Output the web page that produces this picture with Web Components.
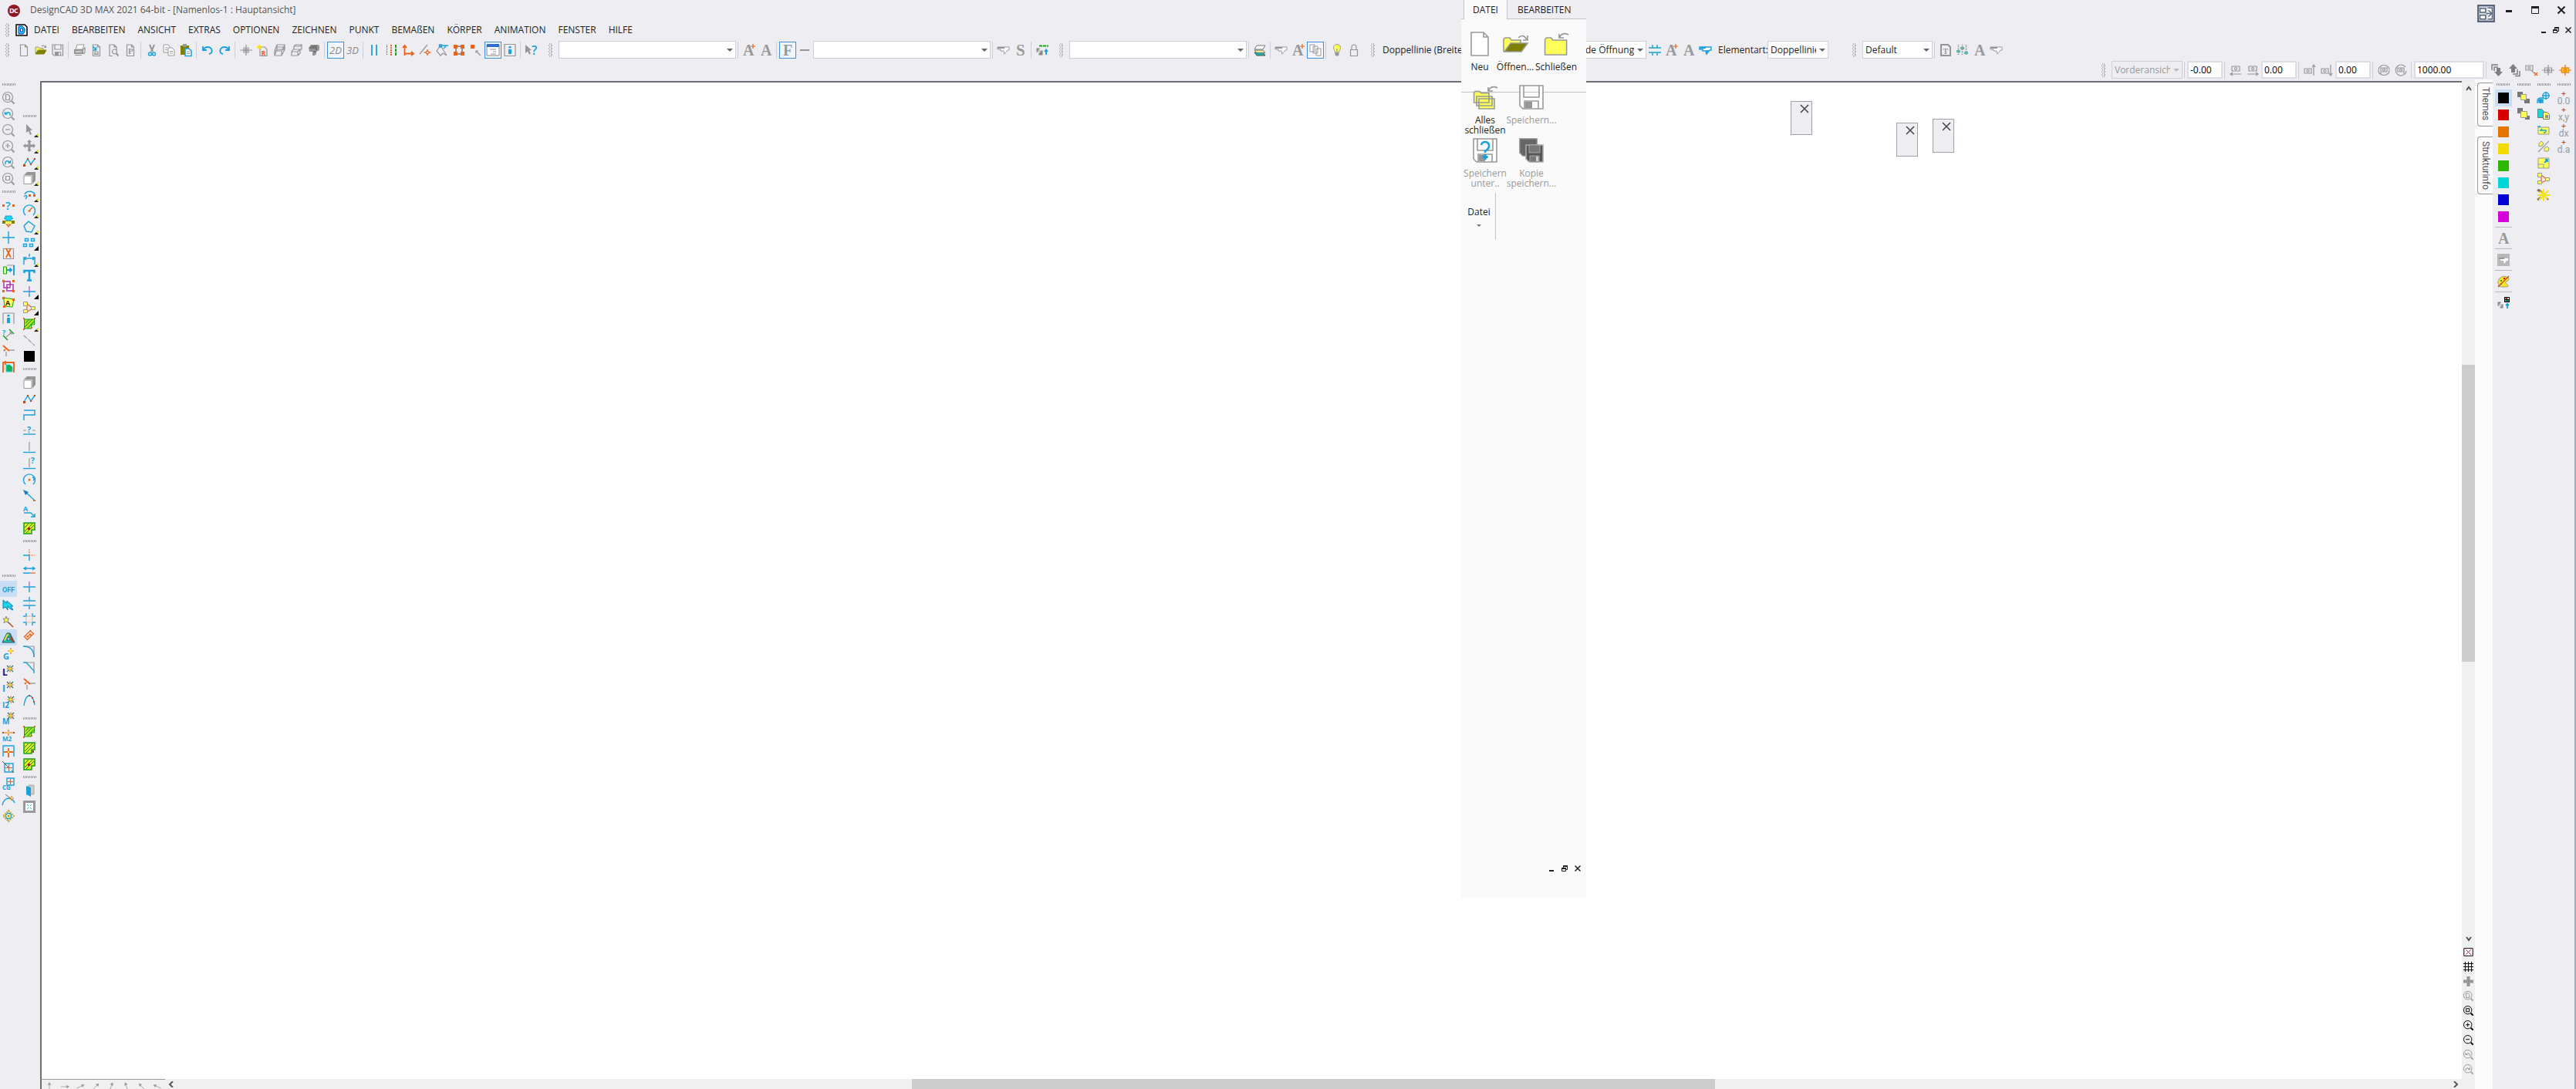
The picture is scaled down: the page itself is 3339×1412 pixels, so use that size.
<!DOCTYPE html>
<html lang="de">
<head>
<meta charset="utf-8">
<title>DesignCAD 3D MAX 2021 64-bit</title>
<style>
  body {
    margin: 0;
    font: 12px/16px "Open Sans", "Noto Sans", sans-serif;
    color: #1e1e1e;
    background: #eeeef2;
  }
</style>
</head>
<body>
<cad-app></cad-app>

<script>
const ICONS = {
  // files
  new: `<path fill="#fff" class="g" d="M3.500 1h6l3 3v11.500h-9zM9.500 1v3h3"/>`,
  open: `<path fill="#f5f55a" stroke="#999" d="M1 12V4h4l1 1.500h5V8"/><path fill="#808000" stroke="#808000" d="M1 13l3.500-5H15l-3 5z"/><path class="g" d="M9 3q3-2 5 1M14.500 2v2.500H12"/>`,
  save: `<path class="g" d="M1 1h13.500v14H3L1 13z"/><path class="g" d="M4 1v6h8V1M4.500 15v-4.500h7V15"/><path class="G" d="M5 11h4v4H5z"/>`,
  print: `<path class="G" d="M1 7h12v6H1z"/><path fill="#fff" stroke="#999" d="M5 1h9l-2 6H3z"/><path d="M3 10h8" stroke="#fff"/><path class="g" d="M13 7l2-2v6l-2 2M2 14.500h9"/>`,
  plot: `<path class="g" d="M3.500 1h6l3 3v11.500h-9zM9.500 1v3h3"/><path class="b" d="M3 3l4 4M7.500 4v4H4"/><path class="g" d="M6 10h4v3H6zM5 13.500h6"/>`,
  preview: `<path class="g" d="M7 15.500H3V1h6l3 3v4M9 1v3h3"/><circle class="g" cx="9.500" cy="10" r="3"/><path class="g2" d="M12 12.500l2.500 3"/>`,
  pdoc: `<path class="g" d="M3.500 1h6l3 3v11.500h-9zM9.500 1v3h3"/><text x="5" y="13" font-family="Liberation Serif" font-size="11" font-weight="bold" fill="#999">P</text>`,
  // edit
  cut: `<path class="g2" d="M5 1l4 9M11 1L7 10"/><circle class="b" cx="5.500" cy="13" r="2"/><circle class="b" cx="10.500" cy="13" r="2"/>`,
  copy: `<path fill="#fff" stroke="#999" d="M1 1h6l2 2v8H1z"/><path fill="#fff" stroke="#999" d="M7 5h5l3 3v7H7zM9 9.500h4M9 12h4M3 5h3M3 7.500h3"/>`,
  paste: `<path fill="#808000" d="M1 2h11v12H1z"/><path fill="#999" d="M4 0h5v4H4z"/><path fill="#fff" stroke="#1ba1d8" stroke-width="1.500" d="M7 6h5l3 3v6.500H7z"/><path class="g" d="M9 10h4M9 12.500h4"/>`,
  undo: `<path class="b2" d="M2 3v5h5M2.500 7.500C5 3 11 3 13 6.500s0 6-3 6.500"/>`,
  redo: `<path class="b2" d="M14 3v5H9M13.500 7.500C11 3 5 3 3 6.500s0 6 3 6.500"/>`,
  // view
  origin: `<path class="g" d="M0 8h16M8 1v14M5 5h6v6H5z"/><circle class="g" cx="8" cy="8" r="1.500"/>`,
  render: `<path class="g" d="M4 4h6l3 3v8.500H4z"/><path fill="#ffe600" d="M3 0l1 2.500L6.500 2 5 4l1.500 2L4 5.500 3 8 2 5.500-.5 6 1 4-.5 2 2 2.500z"/><text x="5.500" y="14.500" font-family="Open Sans" font-size="9" font-weight="bold" fill="#e8641b">R</text>`,
  wire: `<path class="g" d="M1 9h9v6H1zM4 1h10v6H4zM1 9l3-8M10 9l4-8M1 15l3-8M10 15l4-8M3 4h10v6"/>`,
  hidden: `<path class="g" d="M1 10h8v5H1zM1 10l2-3h9l-3 3M12 7v5l-3 3M4 7V3l2-2h8l-2 2H4M14 1v6h-2"/>`,
  shaded: `<path class="G" d="M1 5l3-4h10l1 2v5l-4 2v3l-2 2H6v-5H2z"/><path d="M2 5h9v3M4 3h8M7 10h4" stroke="#555" fill="none"/>`,
  d2: `<text x="0" y="13" font-family="Open Sans" font-style="italic" font-size="13" fill="#888">2D</text>`,
  d3: `<text x="0" y="13" font-family="Open Sans" font-style="italic" font-size="13" fill="#888">3D</text>`,
  // snap and draw aids
  parallel: `<path class="b2" d="M5 1v14M11 1v14"/>`,
  dashes: `<path stroke="#555" d="M2.500 1v14" stroke-dasharray="1 1"/><path stroke="#e8641b" stroke-width="2" d="M8 1v14" stroke-dasharray="2 1"/><path stroke="#18a018" stroke-width="2" d="M14 1v14" stroke-dasharray="4 1"/>`,
  axes: `<path class="o2" d="M3.500 15V3M1 5l2.500-3L6 5M3 12.500h11M12 10l3 2.500-3 2.500"/>`,
  probe: `<path class="g" d="M1 13L11 1"/><path class="o" d="M11 7v2M11 15v-2M6 11h2M16 11h-2M11 8.500l2.500 2.500-2.500 2.500L8.500 11z"/>`,
  node: `<path class="g" d="M1 9L6 2l8 13-5-3-3 3z"/><path class="b" d="M4.500 1h3v3h-3zM8 2h8M10 6l3-3"/>`,
  group: `<path class="g2" d="M3 3h10M3 13h10M4 3v10M12 3v10"/><path class="O" d="M1 1h5v5H1zM10 1h5v5h-5zM1 10h5v5H1zM10 10h5v5h-5z"/>`,
  ungroup: `<path class="O" d="M1 1h5v5H1z"/><path class="g" d="M8 9l6 6M8 12V9h3"/>`,
  props: `<path fill="#fff" stroke="#888" d="M0 1h16v14H0z"/><path fill="#2d6fd0" d="M0 0h16v4H0z"/><path class="g" d="M4 7h8M8 10h4M5 13h7"/>`,
  info: `<path class="g" d="M1 .5h14v15H1z"/><path fill="#1ba1d8" d="M6.500 3h3v2.500h-3zM6 7h4v6H6z"/>`,
  whatsthis: `<path class="G" d="M0 1l8 7-3 .5 2 4-2 1-2-4L0 12z"/><text x="8" y="14" font-family="Open Sans" font-size="16" font-weight="600" fill="#1ba1d8">?</text>`,
  aplus: `<text x="0" y="15" font-family="Liberation Serif" font-size="20" font-weight="bold" fill="#999">A</text><path class="o" d="M13 0v6M10 3h6"/>`,
  a: `<text x="1" y="15" font-family="Liberation Serif" font-size="20" font-weight="bold" fill="#999">A</text>`,
  f: `<text x="2" y="15" font-family="Liberation Serif" font-size="20" font-weight="bold" fill="#999">F</text>`,
  s: `<text x="2" y="15" font-family="Liberation Serif" font-size="21" font-weight="bold" fill="#999">S</text>`,
  dash: `<path class="G" d="M2 7h12v2H2z"/>`,
  hand: `<path fill="#fff" stroke="#999" d="M0 4h15v4h-2l-4 5-1-4H4V7H0z"/><path class="G" d="M0 4h9v2H0z"/>`,
  handblue: `<path fill="#fff" stroke="#1ba1d8" stroke-width="1.500" d="M0 4h15v4h-2l-4 5-1-4H4V7H0z"/><path fill="#1ba1d8" d="M0 4h8v2H0zM8 8h4l-3 4z"/>`,
  layerset: `<path stroke="#18a018" stroke-width="2" stroke-dasharray="4 1" d="M4 2.500h12"/><path fill="#888" stroke="#eee" d="M0 5h5v6H0zM3 8h6v7H3z"/><path class="b2" d="M13 14V8M11 10l2-2.500 2 2.500"/>`,
  layers: `<path fill="#19b3a6" stroke="#555" d="M1 11l3 4h11l-3-4z"/><path fill="#efe9a0" stroke="#777" d="M1 8l3 3.500h11L12 8z"/><path fill="#fff" stroke="#777" d="M1 7l3-5h11l-3 5z"/>`,
  pages: `<path fill="#fff" stroke="#999" d="M1 1h6v9H1zM5 3h6v9H5zM9 6h6v9H9z"/>`,
  bulb: `<path fill="#ffff5a" stroke="#999" d="M5.500 11C5.500 8 3.500 7.500 3.500 4.500a4.500 4 0 0 1 9 0c0 3-2 3.500-2 6.500z"/><path class="G" d="M5.500 11h5v3l-1 1.500h-3l-1-1.500z"/><path class="g" d="M8 10V6"/>`,
  lock: `<path class="g" d="M3.500 7.500h9v8h-9zM5 7.500V4a3 3 0 0 1 6 0v3.500"/>`,
  cross2: `<path class="b" d="M0 5h16M0 11h16M5 1v4M11 1v4M5 11v4M11 11v4"/>`,
  textdoc: `<path class="g2" d="M2 1h9l3 3v11H2z"/><text x="4.500" y="13" font-family="Liberation Serif" font-size="10" font-weight="bold" fill="#999">T</text>`,
  scales: `<path class="g2" stroke-dasharray="1 1" d="M2.500 1v14M7.500 1v14M12.500 1v14"/><path fill="#5fb8b0" d="M0 8h5v3H0zM5 4h5v3H5zM10 10h5v3h-5z"/>`,
  // cameras
  caml: `<path class="g" d="M3 3h10v6H3zM1 13h14M4 11l-3 2 3 2"/><circle class="g" cx="8" cy="6" r="1.500"/>`,
  camr: `<path class="g" d="M3 3h10v6H3zM1 13h14M12 11l3 2-3 2"/><circle class="g" cx="8" cy="6" r="1.500"/>`,
  camu: `<path class="g" d="M1 6h9v6H1zM13 15V1M11 4l2-3 2 3"/><circle class="g" cx="5.500" cy="9" r="1.500"/>`,
  camd: `<path class="g" d="M1 6h9v6H1zM13 1v14M11 12l2 3 2-3"/><circle class="g" cx="5.500" cy="9" r="1.500"/>`,
  camcw: `<path class="g" d="M4 5h8v5H4zM2 12A7 7 0 1 1 14 12M14 12q-6 5-12 0M1 9l1 3h3"/><circle class="g" cx="8" cy="7.500" r="1.500"/>`,
  camccw: `<path class="g" d="M4 5h8v5H4zM14 4A7 7 0 1 0 14 12M15 9l-1 3h-3"/><circle class="g" cx="8" cy="7.500" r="1.500"/>`,
  movedown: `<path fill="#808080" d="M7 5h5v5h3l-5.500 6L4 10h3z"/><path stroke="#808080" stroke-width="1.500" d="M1 8V1h8M4 9V4h5"/>`,
  moveup: `<path fill="#808080" d="M4 11V6H1l5.500-6L12 6H9v5z"/><path stroke="#808080" stroke-width="1.500" d="M6 13h6V7M9 15.500h6V9"/>`,
  camline: `<path class="g" d="M1 2h9v6H1zM8 8l4 4"/><circle class="g" cx="5.500" cy="5" r="1.500"/><path class="o" d="M12 11l4 4M16 11l-4 4"/>`,
  camorigin: `<path class="g" d="M0 8h16M8 1v14M3.500 5h9v6h-9z"/><circle class="g" cx="8" cy="8" r="1.500"/>`,
  camhot: `<path class="o" d="M0 8h16M8 1v14"/><path fill="#ffd21b" stroke="#f08a1b" stroke-width="1.500" d="M3.500 5h9v6h-9z"/><circle class="o" cx="8" cy="8" r="1.500"/>`,
  // zoom
  zdoc: lens(`<path class="g" d="M4.500 3.500h3l2 2v5h-5z"/>`),
  zprev: lens(`<path class="b" d="M3.500 5v3h3M4 8q3-4 6-1v3"/>`),
  znext: lens(`<path class="b" d="M10.500 5v3h-3M10 8Q7 4 4 7v3"/>`),
  zout: lens(`<path class="g" d="M4 7h6"/>`),
  zin: lens(`<path class="g" d="M4 7h6M7 4v6"/>`),
  zwin: lens(`<path class="g" d="M4.500 4.500h5v5h-5z"/>`),
  // left palette
  query: `<text x="4" y="14" font-family="Open Sans" font-size="15" font-weight="600" fill="#1ba1d8">?</text><path class="O" d="M0 7h3v3H0zM13 7h3v3h-3z"/>`,
  lamp: `<path fill="#808000" d="M0 7h16v4H0z"/><path fill="#19d7e6" stroke="#1ba1d8" d="M4 1h8v3h2L8 8 2 4h2z"/><path fill="#ffff5a" d="M4 8h8v3H4z"/><path class="o" d="M5.500 12h5L8 15z"/>`,
  plus: `<path class="b" d="M0 8h16M8 0v16"/>`,
  delete: `<path class="g" d="M1.500 1.500h13v13h-13z"/><path class="o2" d="M5 1l6 12M11 1L5 13"/>`,
  stretch: `<path class="g" d="M6 2h9v13"/><path fill="#f5f5a0" stroke="#18a018" d="M1.500 4v9h4V4z"/><path class="b2" d="M6 8h6M9.500 5.500L12 8l-2.500 2.500M15 2v13"/>`,
  dup: `<path stroke="#b030b0" stroke-width="1.500" fill="#fff" d="M2 2h8v8H2zM6 6h8v8H6z"/><path class="O" d="M0 0h3v3H0zM13 0h3v3h-3zM0 13h3v3H0zM13 13h3v3h-3z"/>`,
  textbox: `<path fill="#ffff5a" stroke="#18a018" d="M1.500 2L15 4l-2 10-10-1z"/><text x="4" y="12" font-family="Open Sans" font-size="9" font-weight="bold" fill="#1e1e1e">A</text><path class="O" d="M0 1h3v3H0zM13 3h3v3h-3zM1 12h3v3H1z"/>`,
  infobox: `<path class="g" d="M1 15V1h14v14"/><path fill="#1ba1d8" d="M6.500 3h3v2.500h-3zM6 7h4v7H6z"/>`,
  measure: `<path stroke="#18a018" stroke-width="1.500" d="M9 1l6 6M1 9l6 6"/><path class="g" d="M5 11l7-6M9 5h3v3"/><text x="0" y="8" font-family="Open Sans" font-size="9" font-weight="bold" fill="#1ba1d8">?</text>`,
  trim: `<path stroke="#b4b4b4" stroke-width="2" d="M7 7h9M5 9v6"/><path class="o2" d="M1 1l8 7M2 8l2-2"/>`,
  pagebox: `<path class="o2" d="M1 15V2h14v13M1 2h5M4 0v5"/><path fill="#18b050" stroke="#19d7e6" d="M5 5h5l3 3v6H5z"/>`,
  select: `<path class="G" d="M4 1l8 8H9l2 5-2 1-2-5-3 2z"/>`,
  move: `<path class="G" d="M8 0l3 3H9.500v3.500H13V5l3 3-3 3V9.500H9.500V13H11l-3 3-3-3h1.500V9.500H3V11L0 8l3-3v1.500h3.500V3H5z"/>`,
  polyline: `<path class="b" d="M1 12l5-8 4 7 5-7"/><path fill="#b05020" d="M0 11h3v3H0zM5 3h2v2H5zM9 10h2v2H9zM14 3h2v2h-2z"/>`,
  cube: `<path fill="#fff" stroke="#999" d="M1 5h10v10.500H1z"/><path class="G" d="M1 4l4-4h11l-4 4zM12 4l4-4v11l-4 4.500z"/>`,
  arc: `<path class="b" d="M2 8A7 6 0 0 1 15 8M1 11q3-3 4 0l-2 3"/><path class="O" d="M7 8h3v3H7zM13 8h3v3h-3z"/>`,
  circle: `<path class="b" d="M3 14A7.500 7.500 0 1 1 13 14"/><path class="o" d="M8 8l4-4"/><path class="O" d="M6.500 7.500h3v2h-3z"/>`,
  plane: `<path class="b" d="M7 1l8 6-4 8-7-1-3-7z"/>`,
  array: `<path class="b" d="M2.500 2.500h4v3h-4zM10.500 2.500h4v3h-4zM.5 9.500h4v3h-4zM8.500 9.500h4v3h-4z"/>`,
  dim: `<path class="b" d="M1 5v10M15 5v10M1 7h14M4 5L1 7l3 2M12 5l3 2-3 2M8 1v4"/>`,
  text: `<path fill="none" stroke="#1ba1d8" stroke-width="2.500" d="M1.500 5V2h13v3M8 2v12M5 14.500h6"/>`,
  point: `<path class="b" d="M0 8h16M8 8v7"/><path stroke="#c070d0" stroke-width="1.500" d="M8 1v7"/>`,
  polygons: `<path class="o" d="M5 3l8 6-8 4z"/><path fill="#ffff5a" stroke="#999" d="M.5.500h5v5h-5zM10.500 6.500h5v4h-5zM.5 10.500h5v4h-5z"/>`,
  hatch: `<path fill="#a5e61b" stroke="#18a018" d="M1.500 2h13v7h-4v5h-9z"/><path stroke="#187818" d="M3 7l5-5M2 12L12 2M6 13l8-8"/><path class="O" d="M0 0h2v2H0zM14 0h2v2h-2zM0 14h2v2H0zM10 12h2v2h-2z"/>`,
  hatchb: `<path fill="#d9f21b" stroke="#18a018" stroke-width="1.500" d="M1 1h14v9h-4v5H1z"/><path stroke="#187818" d="M2 7l5-5M2 12L12 2M4 14L14 4"/><path fill="#b02020" d="M6 7h3v3H6z"/>`,
  hatchc: `<path fill="#d9f21b" stroke="#18a018" stroke-width="1.500" d="M1 1h14v9h-4v5H1z"/><path stroke="#187818" d="M2 7l5-5M2 12L12 2M4 14L14 4"/><path fill="#b05020" d="M11 11h3v3h-3z"/>`,
  dashline: `<path class="g" stroke-dasharray="5 1 1 1" d="M1 2l14 13"/>`,
  black: `<path fill="#000" d="M1 1h14v14H1z"/>`,
  zline: `<path class="b" d="M1 15V8h14V2H1"/>`,
  qline: `<path class="g" d="M0 7h4M12 7h4"/><path class="b" d="M0 12h16"/><text x="5" y="10" font-family="Open Sans" font-size="11" font-weight="bold" fill="#1ba1d8">?</text>`,
  perp: `<path stroke="#aaa" stroke-width="1.500" d="M8 1v12"/><path class="b" d="M0 14.500h16"/>`,
  qperp: `<path stroke="#aaa" stroke-width="1.500" d="M8 1v12"/><path class="b" d="M0 14.500h16"/><text x="10" y="8" font-family="Open Sans" font-size="10" font-weight="bold" fill="#1ba1d8">?</text>`,
  qcircle: `<path class="b" d="M3 14A7.500 7.500 0 1 1 13 14M12 5q3 0 2 3l-1 1"/><circle class="O" cx="8" cy="8" r="1.500"/>`,
  arrow: `<path class="b" d="M2 2l12 11"/><path fill="#1580b8" d="M0 0l7 3-4 4z"/><path class="O" d="M13 13h3v2h-3z"/>`,
  leader: `<path class="b" d="M1 9h9l5 5M10 14h5v-4"/><text x="0" y="7" font-family="Open Sans" font-size="9" font-weight="bold" fill="#1ba1d8">A</text>`,
  corner: `<path class="b" d="M0 9h8v7"/><path class="o" stroke-dasharray="1 1" d="M8 1v8h8"/>`,
  span: `<path class="b" d="M2 5h12M4 3L1 5l3 2M12 3l3 2-3 2M0 11h9"/><path class="o" d="M9 11h7"/>`,
  dcross: `<path class="b" d="M0 5h16M0 11h16M8 5V0M8 11v5"/><path stroke="#d8b8a0" d="M8 5v6"/>`,
  hash: `<path class="b" d="M0 4h4V0M12 0v4h4M0 12h4v4M12 16v-4h4"/><path stroke="#d8b8a0" d="M4 4h8v8H4z"/>`,
  caliper: `<path class="o" d="M2 9l8-8M5 14l9-9M1 9l5 5M9 2l5 4M5 10l5-4M5 8v2h2M8 6h2v2"/>`,
  fillet: `<path class="g" d="M0 1h14v14"/><path class="b" d="M0 1q14 0 14 14"/>`,
  chamfer: `<path class="g" d="M4 1h10v12"/><path class="b" d="M0 1h4l10 11v3"/>`,
  curve: `<path class="b" d="M1 15Q3 2 8 2t7 12"/><path fill="#b05020" d="M7 1h2v2H7zM11 4h2v2h-2zM13 9h2v2h-2z"/>`,
  panel: `<path fill="#ccc" stroke="#aaa" d="M7 1h7v12H7z"/><path fill="#1ba1d8" d="M4 2l6 2v12l-6-3z"/>`,
  frame: `<path fill="#fff" stroke="#999" stroke-width="3" d="M1.500 1.500h13v13h-13z"/><path stroke="#19c8d8" d="M5 5l2 2M11 5L9 7M5 11l2-2M11 11l-2-2"/>`,
  off: `<text x="8" y="12" text-anchor="middle" font-family="Roboto" font-size="9" font-weight="bold" fill="#1ba1d8">OFF</text>`,
  cursors: `<path fill="#19d7e6" stroke="#1580b8" d="M1 1l5 4V2l8 7h-3l3 5-3-1-4-4v5l-3-4-3 2z"/>`,
  wand: `<path fill="#f5f55a" stroke="#888" d="M5 1l1 3h3L7 6l1 4-3-2-3 2 1-4-2-2h3z"/><path stroke="#b05020" stroke-width="1.500" d="M8 9l6 6"/>`,
  tri: `<path fill="#19c8b8" stroke="#23505a" d="M6 2h4l6 12H0z"/><path fill="#f5e61b" d="M6 3h2L4 11H2z"/><path fill="#b04030" d="M9 3h1l5 10h-3z"/><path fill="#c9def5" stroke="#23505a" d="M8 6l2.500 5h-5z"/>`,
  g: `<text x="1" y="15" font-family="Open Sans" font-size="11" font-weight="bold" fill="#1ba1d8">G</text><path class="o" d="M7 4h8M11 0v8"/><path fill="#ffe61b" d="M11 1l1 2 2 1-2 1-1 2-1-2-2-1 2-1z"/>`,
  l: `<text x="0" y="15" font-family="Open Sans" font-size="12" font-weight="bold" fill="#10107a">L</text>${star(10, 6)}`,
  i: `<text x="0" y="15" font-family="Open Sans" font-size="12" font-weight="bold" fill="#1ba1d8">I</text>${star(10, 6)}`,
  i2: `<text x="0" y="15" font-family="Open Sans" font-size="10" font-weight="bold" fill="#1ba1d8">I2</text>${star(11, 4)}`,
  m: `<text x="0" y="15" font-family="Open Sans" font-size="10" font-weight="bold" fill="#1ba1d8">M</text>${star(11, 4)}`,
  m2: `<text x="0" y="16" font-family="Open Sans" font-size="8" font-weight="bold" fill="#1ba1d8">M2</text><path class="o" d="M1 5h14M8 1v8"/><path fill="#b05020" d="M0 4h2v2H0zM14 4h2v2h-2z"/><path fill="#ffe61b" d="M7 4h2v2H7z"/>`,
  mid: `<path class="b" d="M1 15V1h14v14"/><path class="o2" d="M2 9h12M8 4v12"/><path fill="#ffe61b" d="M7 8h2v2H7z"/>`,
  center: `<path class="b" d="M3 3h11v11H3z"/><path class="o" d="M4 8.500h9M8.500 4v9"/><path stroke="#555" d="M0 0l8 8M12 12l3 3"/>`,
  cg: `<path class="b" d="M6 1h9v9H6z"/><path class="o" d="M7 5.500h7M10.500 2v7"/><text x="0" y="16" font-family="Open Sans" font-size="8" font-weight="bold" fill="#1ba1d8">CG</text>`,
  tangent: `<path class="b" d="M0 15Q2 6 9 6q5 1 7 6"/><path stroke="#777" d="M4 1l8 6"/><path class="o" d="M9 6h6M12 3v6"/><path fill="#ffe61b" d="M11 5h2v2h-2z"/>`,
  quad: `<path fill="#fff8a0" stroke="#c0a060" stroke-width="2" stroke-dasharray="2 1" d="M8 1l7 7-7 7-7-7z"/><circle class="b" cx="8" cy="8" r="3.500"/><path class="O" d="M7 7h2v2H7z"/>`,
  // right palettes
  handbox: `<path fill="#b8b8b8" d="M0 0h16v16H0z"/><path fill="#fff" d="M2 6h12v3h-2l-3 4-1-4H5z"/><path class="G" d="M2 5h7v2H2z"/>`,
  palette: `<path fill="#ffe61b" stroke="#999" d="M2 13Q-1 7 4 3t11 1q0 3-3 4t1 4-4 3-7-2z"/><path fill="#18a018" d="M4 6h2v2H4z"/><path fill="#1ba1d8" d="M4 10h2v2H4z"/><path fill="#d00" d="M8 3h2v2H8z"/><path stroke="#c05020" stroke-width="1.500" d="M1 15L15 1"/>`,
  colset: `<path fill="#000" d="M9 0h7v7H9z"/><path fill="#e8641b" d="M10 1h2v2h-2z"/><path fill="#fff" d="M13 1h2v2h-2z"/><path fill="#1ba1d8" d="M10 4h2v2h-2z"/><path fill="#18a018" d="M13 4h2v2h-2z"/><path fill="#888" stroke="#eee" d="M0 6h5v6H0zM3 9h5v6H3z"/><path class="b2" d="M13 15V9M11 11l2-2 2 2"/>`,
  front: `<path fill="#777" d="M0 0h7v7H0zM9 9h7v6H9z"/><path fill="#ffff5a" stroke="#999" d="M4.500 3.500h7v7h-7z"/>`,
  back: `<path fill="#777" d="M10 10h6v5h-6z"/><path fill="#ffff5a" stroke="#999" d="M4.500 4.500h8v8h-8z"/><path fill="#777" d="M0 0h7v4H4v3H0z"/>`,
  globes: `<circle class="b" cx="11" cy="5" r="4"/><path class="b" d="M11 0v10M6 5h10"/><circle fill="#1ba1d8" cx="4" cy="12" r="3"/><path class="b" d="M0 15V11q1-3 4-3h3v7"/>`,
  docs: `<path fill="#19d7d7" stroke="#777" d="M.5 1.500h5l3 3v8h-8z"/><path fill="#ffff5a" stroke="#777" d="M7.500 5.500h5l3 3v6h-8z"/><path class="G" d="M10 9h4v4h-4z"/>`,
  rotate: `<path fill="#ffff5a" stroke="#999" d="M1 4h14v9H1z"/><path class="b" d="M6 6l-2 2h7q1 3-3 3M0 3h4"/>`,
  percent: `<path class="g" d="M1 15L15 1"/><path fill="#ffff5a" stroke="#999" d="M2 8V4l3-3 3 3-2 3zM9 14v-4l3-2 3 2-1 4z"/>`,
  scale: `<path fill="#ffff5a" stroke="#999" d="M1 2h14v13H1zM1 10h7v5"/><path class="b2" d="M9 8l4-4M10 4h3v3"/>`,
  rays: `<path stroke="#777" stroke-width="3" d="M0 1l5 3M0 14l5-3"/><path stroke="#b05020" stroke-width="2" d="M2 1l4 4M14 14l-3-3"/><path stroke="#f0e61b" stroke-width="2" d="M8 0v16M0 8h16M3 3l10 10M14 2L2 14"/>`,
  abs: coord("0.0"), xy: coord("x,y"), dx: coord("dx"), da: coord("d.a"),
  // view controls beside the scroll bar
  vfit: `<path stroke="#000" stroke-width="1.200" fill="#fff" d="M1 2h14v12H1z"/><path stroke="#c02040" stroke-width="1.200" d="M4 4l8 8M12 4l-8 8"/>`,
  vgrid: `<path stroke="#000" stroke-width="1.200" d="M3 0v16M8 0v16M13 0v16M0 3h16M0 8h16M0 13h16"/>`,
  vpan: `<path class="G" d="M5.500 0h5v5.500H16v5h-5.500V16h-5v-5.500H0v-5h5.500z"/>`,
  vwin: black(`<path d="M4.500 4.500h5v5h-5z"/>`), vin: black(`<path d="M4 7h6M7 4v6"/>`), vout: black(`<path d="M4 7h6"/>`),
  vprev: lens(`<path class="g" d="M3.500 5v3h3M4 8q3-4 6-1v3"/>`),
  vnext: lens(`<path class="g" d="M10.500 5v3h-3M10 8Q7 4 4 7v3"/>`),
  // directions
  r0: dir(0), r1: dir(90), r2: dir(65), r3: dir(45), r4: dir(20), r5: dir(-20), r6: dir(-45), r7: dir(-65),
  // window controls
  min: `<path fill="#1e1e1e" d="M4 8h8v3H4z"/>`,
  max: `<path fill="none" stroke="#1e1e1e" d="M3.500 3.500h9v9h-9z"/><path fill="#1e1e1e" d="M3 3h10v3H3z"/>`,
  close: `<path stroke="#1e1e1e" stroke-width="2" d="M3.500 3.500l9 9M12.500 3.500l-9 9"/>`,
  smin: `<path fill="#1e1e1e" d="M5 10h6v2H5z"/>`,
  srest: `<path fill="none" stroke="#1e1e1e" d="M4.500 7.500h5v4h-5zM6.500 7V4.500h5v5H10"/><path fill="#1e1e1e" d="M6 4h6v2H6zM4 7h6v2H4z"/>`,
  sclose: `<path stroke="#1e1e1e" stroke-width="1.500" d="M4.500 4.500l7 7M11.500 4.500l-7 7"/>`,
  fclose: `<path stroke="#444" stroke-width="1.500" d="M3 3l10 10M13 3L3 13"/>`,
  logo: `<circle cx="8" cy="8" r="8" fill="#8c1822"/><text x="2" y="11" font-family="Open Sans" font-size="9" font-weight="bold" fill="#fff">D</text><text x="8" y="11" font-family="Open Sans" font-size="9" font-weight="bold" fill="#fff">C</text>`,
  doc: `<path fill="#fff" stroke="#000" stroke-width="1.500" d="M1 1h11l3 3v11H1z"/><path fill="#19d7f0" stroke="#1030c0" d="M4 3h5l3 3v4l-2 3H4z"/><path fill="#fff" stroke="#1030c0" d="M6.500 6h3v4h-3z"/>`,
  dock: `<path fill="#d4dae4" stroke="#5a6478" stroke-width="1.500" d="M.8.800h14.400v14.400H.8z"/><path fill="#fff" stroke="#5a6478" d="M2.500 3.500h5v3.500h-5zM2.500 9.500h5V13h-5zM9.500 3h4v10h-4M8 8h4M10 5l3 3-3 3"/>`,
  // ribbon
  bignew: `<path fill="#fff" stroke="#999" stroke-width=".8" d="M2.500.500h8l3 3v12h-11zM10.500.500v3h3"/>`,
  bigopen: `<path fill="#ffff5a" stroke="#999" stroke-width=".8" d="M.5 13V5l1-1h3l1 1.500h6V8"/><path fill="#808000" stroke="#999" stroke-width=".8" d="M1 13l4-5.500h11L12 13z"/><path class="g thin" d="M10 4q3-3 5.500 1M16 2.500v3h-3"/>`,
  bigclose: `<path fill="#ffff5a" stroke="#999" stroke-width=".8" d="M.8 15V5l1-1h3l1 1.500h9V15z"/><path class="g thin" d="M16 2q-4-2-6 2M10 1.500V4h3"/>`,
  bigcloseall: `<path fill="#ffff5a" stroke="#999" stroke-width=".8" d="M4 9h10v6.500H4zM2.500 7.500h10v6H2.500zM.8 11.500V5l.7-.7h3l1 1h5v6.200z"/><path class="g thin" d="M16 2q-4-2-6 2M10 1.500V4h3"/>`,
  bigsave: `<path fill="#fff" stroke="#999" stroke-width=".8" d="M.5.500h15v15H2.500l-2-2zM3 .500v7.500h10V.500M3.500 15.500v-5h9v5"/><path class="G" d="M4 11h4.500v4H4z"/>`,
  bigsaveas: `<path fill="#fff" stroke="#999" stroke-width=".8" d="M.5.500h15v15H2.500l-2-2zM3 .500v7.500h10V.500M3.500 15.500v-5h9v5"/><path class="G" d="M4 11h4v4H4z"/><path fill="none" stroke="#1ba1d8" stroke-width="1.300" d="M5.500 4.500Q6 2.500 8 2.500t2.500 2-2.500 4v1"/><path fill="#1ba1d8" d="M7.300 10.500h1.500v1h1v1.500h-1v1H7.300v-1h-1v-1.500h1z"/>`,
  bigcopy: `<path fill="#666" stroke="#888" stroke-width=".8" d="M.5.500h11v11h-9l-2-2z"/><path fill="#555" stroke="#aaa" stroke-width=".8" d="M4.500 4.500h11v11h-9l-2-2z"/><path fill="#777" stroke="#aaa" stroke-width=".5" d="M6.500 4.500h7v5h-7zM7 11.500h6v4H7z"/><path fill="#ccc" d="M11 12h1.500v3H11z"/>`,
};

function star(x, y) {
  return `<path stroke="#187868" stroke-width="1.200" d="M${x - 4} ${y - 4}l8 8M${x + 4} ${y - 4}l-8 8"/><path class="o" d="M${x - 4.5} ${y}h9M${x} ${y - 4.5}v9"/><path fill="#ffe61b" d="M${x - 1.5} ${y - 1.5}h3v3h-3z"/>`;
}

function coord(label) {
  return `<path stroke="#b05020" d="M8 0v5M5.500 2.500h5"/><text x="8" y="16" text-anchor="middle" font-family="Roboto" font-size="12" fill="#999">${label}</text>`;
}

function lens(inner) {
  return `<circle class="g" cx="7" cy="7" r="6.500"/>${inner}<path class="g2" d="M12 12l3.500 3.500"/>`;
}

function black(inner) {
  return `<g fill="none" stroke="#000" stroke-width="1.200"><circle cx="7" cy="7" r="6.400"/>${inner}<path stroke-width="2.500" d="M12 12l3.500 3.500"/></g>`;
}

function dir(angle) {
  return `<g transform="rotate(${angle} 8 8)"><path stroke="#999" d="M8 15V3"/><path fill="#999" d="M8 0l3 5H5z"/></g>`;
}

class CadElement extends HTMLElement {
  constructor() {
    super();
    this.attachShadow({ mode: "open" });
  }

  connectedCallback() {
    this.shadowRoot.innerHTML = this.template();
  }

  attr(name, fallback = "") {
    return this.getAttribute(name) || fallback;
  }
}

class CadIcon extends CadElement {
  template() {
    return `
      <style>
        :host { display: block; width: var(--icon, 16px); height: var(--icon, 16px); }
        svg { display: block; width: 100%; height: 100%; overflow: visible; fill: none; }
        .g { fill: none; stroke: #969696; stroke-width: 1.2; }
        .b { fill: none; stroke: #1ba1d8; stroke-width: 1.4; }
        .o { fill: none; stroke: #e8641b; stroke-width: 1.2; }
        .g2 { fill: none; stroke: #969696; stroke-width: 2; }
        .b2 { fill: none; stroke: #1ba1d8; stroke-width: 1.8; }
        .o2 { fill: none; stroke: #e8641b; stroke-width: 1.8; }
        .thin { stroke-width: .8; }
        .G { fill: #969696; }
        .O { fill: #e8641b; }
      </style>
      <svg viewBox="0 0 16 16" aria-hidden="true">${ICONS[this.attr("name")] || ""}</svg>
    `;
  }
}

// A run of tool buttons. "|" is a divider, a leading "*" marks an active tool,
// a trailing "~" or "^" adds a yellow or black fly-out corner.
class CadTools extends CadElement {
  template() {
    const items = this.attr("icons").split(/\s+/).map((item) => {
      if (item === "|") return `<span class="sep"></span>`;
      const name = item.replace(/[*~^]/g, "");
      const cls = [
        item.startsWith("*") ? "on" : "",
        item.endsWith("~") ? "fly" : "",
        item.endsWith("^") ? "fly dark" : "",
      ].join(" ");
      return `<button type="button" class="${cls}" aria-label="${name}"><cad-icon name="${name}"></cad-icon></button>`;
    });
    return `
      <style>
        :host { display: flex; align-items: center; flex: none; }
        :host([vertical]) { flex-direction: column; }
        button {
          position: relative;
          display: flex;
          align-items: center;
          justify-content: center;
          box-sizing: border-box;
          flex: none;
          width: var(--tool-w, 22px);
          height: var(--tool-h, 22px);
          padding: 0;
          border: 0;
          background: none;
        }
        .on { border: 1px solid #3c8fd8; background: #f2f5fb; }
        :host([vertical]) .on { border: 0; background: #c9def5; }
        .fly::after {
          content: "";
          position: absolute;
          right: -1px;
          bottom: 0;
          border: 3px solid;
          border-color: transparent #e6e61b #222 transparent;
        }
        .fly.dark::after { border-color: transparent #000 #000 transparent; }
        .sep { flex: none; width: 1px; height: 22px; margin: 0 3px 0 2px; background: #ccced8; }
        :host([vertical]) .sep { width: 22px; height: 1px; margin: 2px 0 3px; background: #bbb; }
      </style>
      ${items.join("")}
    `;
  }
}

class CadToolbar extends CadElement {
  template() {
    return `
      <style>
        :host { display: flex; align-items: center; flex: none; height: 24px; white-space: nowrap; }
        .grip {
          flex: none;
          width: 5px;
          height: 18px;
          margin: 0 8px 0 7px;
          background:
            linear-gradient(#aaa, #aaa) 0 0 / 1px 1px,
            linear-gradient(#aaa, #aaa) 0 0 / 1px 1px;
          background:
            conic-gradient(#a4a4a8 25%, transparent 0) 0 0 / 2px 4px,
            conic-gradient(#a4a4a8 25%, transparent 0) 1px 2px / 4px 4px;
          opacity: .7;
        }
      </style>
      <span class="grip"></span><slot></slot>
    `;
  }
}

class CadPalette extends CadElement {
  template() {
    return `
      <style>
        :host { display: flex; flex-direction: column; align-items: center; --tool-w: 22px; --tool-h: 21px; }
        .grip {
          width: 17px;
          height: 3px;
          margin: 5px 0;
          background: repeating-linear-gradient(90deg, #999 0 1px, transparent 1px 2px);
        }
      </style>
      <span class="grip"></span><slot></slot>
    `;
  }
}

class CadCombo extends CadElement {
  template() {
    return `
      <style>
        :host { display: block; position: relative; flex: none; height: 23px; }
        select {
          box-sizing: border-box;
          width: 100%;
          height: 100%;
          padding: 0 15px 0 var(--inset, 3px);
          border: 1px solid #ccced8;
          border-radius: 0;
          appearance: none;
          background: #fff;
          color: inherit;
          font: inherit;
        }
        select:disabled { background: #eeeef2; color: #999; opacity: 1; }
        :host::after {
          content: "";
          position: absolute;
          right: 4px;
          top: 10px;
          border: 4px solid transparent;
          border-top-color: #666;
          border-bottom: 0;
        }
        :host([disabled])::after { border-top-color: #bbb; }
      </style>
      <select aria-label="${this.attr("label", "Auswahl")}" ${this.hasAttribute("disabled") ? "disabled" : ""}>
        <option>${this.attr("value")}</option>
      </select>
    `;
  }
}

class CadField extends CadElement {
  template() {
    return `
      <style>
        :host { display: block; flex: none; width: 46px; height: 23px; }
        input {
          box-sizing: border-box;
          width: 100%;
          height: 100%;
          padding: 0 2px;
          border: 2px solid #dcdce6;
          background: #fff;
          color: #000;
          font: inherit;
        }
      </style>
      <input type="text" aria-label="${this.attr("label")}" value="${this.attr("value")}">
    `;
  }
}

class CadMenu extends CadElement {
  template() {
    const items = ["DATEI", "BEARBEITEN", "ANSICHT", "EXTRAS", "OPTIONEN", "ZEICHNEN", "PUNKT",
      "BEMAßEN", "KÖRPER", "ANIMATION", "FENSTER", "HILFE"];
    return `
      <style>
        :host { display: flex; align-items: center; }
        button { padding: 0 8px; border: 0; background: none; color: inherit; font: inherit; }
      </style>
      <cad-icon name="doc"></cad-icon>
      ${items.map((item) => `<button type="button">${item}</button>`).join("")}
    `;
  }
}

class CadFloat extends CadElement {
  template() {
    return `
      <style>
        :host {
          position: absolute;
          box-sizing: border-box;
          width: 28px;
          height: 44px;
          border: 1px solid #a0a0a8;
          background: #eeeef2;
        }
        button { display: block; margin: 1px 1px 0 auto; padding: 0; border: 0; background: none; }
      </style>
      <button type="button" aria-label="Schließen"><cad-icon name="fclose"></cad-icon></button>
    `;
  }
}

class RibbonItem extends CadElement {
  template() {
    return `
      <style>
        :host { display: block; flex: none; height: 69px; }
        button {
          display: flex;
          flex-direction: column;
          align-items: center;
          gap: 7px;
          width: 100%;
          padding: 0;
          border: 0;
          background: none;
          color: inherit;
          font: inherit;
          line-height: 13px;
        }
        button:disabled { color: #999; }
        cad-icon { --icon: 32px; }
      </style>
      <button type="button" ${this.hasAttribute("disabled") ? "disabled" : ""}>
        <cad-icon name="${this.attr("icon")}"></cad-icon>
        <span><slot></slot></span>
      </button>
    `;
  }
}

class CadRibbon extends CadElement {
  template() {
    return `
      <style>
        :host {
          position: absolute;
          display: flex;
          flex-direction: column;
          left: 1894px;
          top: 0;
          width: 162px;
          height: 1164px;
          background: #fafafa;
        }
        .tabs { display: flex; height: 25px; padding-left: 3px; background: #eeeef2; box-shadow: inset 0 -1px #c4c4c8; }
        .tabs button { padding: 1px 13px 0; border: 0; background: none; color: inherit; font: inherit; }
        .tabs .active { width: 57px; border: solid #c4c4c8; border-width: 0 1px; background: #fafafa; padding: 1px 0 0; }
        .body {
          flex: 1;
          padding: 16px 2px 0;
          background: linear-gradient(#c4c4c8, #c4c4c8) 0 94px / 100% 1px no-repeat;
        }
        .row { display: flex; }
        .w44 { width: 44px; } .w48 { width: 48px; } .w58 { width: 58px; } .w64 { width: 62px; }
        .group {
          display: flex;
          flex-direction: column;
          align-items: center;
          box-sizing: border-box;
          width: 43px;
          height: 61px;
          margin-top: 2px;
          padding-top: 17px;
          border-right: 1px solid #c4c4c8;
        }
        .group i { margin-top: 8px; border: 3px solid transparent; border-top-color: #777; border-bottom: 0; }
        .win { display: flex; justify-content: flex-end; height: 38px; padding-bottom: 8px; --tool-w: 17px; --tool-h: 16px; }
        .win cad-tools { align-items: flex-start; margin-right: 3px; }
      </style>
      <div class="tabs"><button type="button" class="active">DATEI</button><button type="button">BEARBEITEN</button></div>
      <div class="body">
        <div class="row">
          <ribbon-item class="w44" icon="bignew">Neu</ribbon-item>
          <ribbon-item class="w48" icon="bigopen">Öffnen...</ribbon-item>
          <ribbon-item class="w58" icon="bigclose">Schließen</ribbon-item>
        </div>
        <div class="row">
          <ribbon-item class="w58" icon="bigcloseall">Alles schließen</ribbon-item>
          <ribbon-item class="w64" icon="bigsave" disabled>Speichern...</ribbon-item>
        </div>
        <div class="row">
          <ribbon-item class="w58" icon="bigsaveas" disabled>Speichern unter..</ribbon-item>
          <ribbon-item class="w64" icon="bigcopy" disabled>Kopie speichern...</ribbon-item>
        </div>
        <div class="group">Datei<i></i></div>
      </div>
      <div class="win"><cad-tools icons="smin srest sclose"></cad-tools></div>
    `;
  }
}

class CadSwatches extends CadElement {
  template() {
    const colors = ["#000000", "#d80000", "#e87400", "#f0dc00", "#2cb800", "#00d8d8", "#0000d4", "#d800d8"];
    return `
      <style>
        :host { display: block; }
        button { display: grid; place-items: center; width: 22px; height: 22px; padding: 0; border: 0; background: none; }
        button:first-of-type { background: #c9def5; }
        span { width: 14px; height: 14px; }
      </style>
      ${colors.map((c) => `<button type="button" aria-label="${c}"><span style="background:${c}"></span></button>`).join("")}
    `;
  }
}

class CadScroll extends CadElement {
  template() {
    return `
      <style>
        :host { display: flex; align-items: center; flex: 1; background: #f0f0f0; }
        :host([vertical]) { flex-direction: column; }
        svg { flex: none; width: 8px; height: 8px; margin: 0 4px; fill: none; stroke: #555; stroke-width: 2; }
        :host([vertical]) svg { margin: 4px 0; }
        .track { flex: 1; align-self: stretch; display: flex; }
        :host([vertical]) .track { flex-direction: column; }
        .before { flex: var(--before); }
        .thumb { flex: var(--size); background: #cdcdcd; }
        .after { flex: var(--after); }
      </style>
      <svg viewBox="0 0 8 8"><path d="${this.hasAttribute("vertical") ? "M1 6l3-4 3 4" : "M6 0L2 4l4 4"}"/></svg>
      <div class="track"><span class="before"></span><span class="thumb"></span><span class="after"></span></div>
      <svg viewBox="0 0 8 8"><path d="${this.hasAttribute("vertical") ? "M1 2l3 4 3-4" : "M2 0l4 4-4 4"}"/></svg>
    `;
  }
}

class CadApp extends CadElement {
  template() {
    return `
      <style>
        :host {
          position: relative;
          display: flex;
          flex-direction: column;
          box-sizing: border-box;
          height: 100vh;
          overflow: hidden;
          border-right: 2px solid #a4a8cc;
        }
        .title { display: flex; align-items: center; height: 26px; padding-left: 10px; color: #555; }
        .title > cad-icon { margin: 1px 13px 0 0; }
        .title .win { --tool-w: 34px; }
        .title .dock { --icon: 23px; --tool-w: 26px; margin-left: auto; padding-top: 8px; }
        .menu { display: flex; align-items: center; height: 25px; }
        .menu .win { --tool-w: 16px; margin-left: auto; }
        .bar { display: flex; align-items: center; height: 27px; gap: 4px; }
        .label { padding-left: 2px; }
        .breite { box-sizing: border-box; width: 144px; }
        .element { box-sizing: border-box; width: 69px; padding-left: 5px; }
        .bar2 { display: flex; justify-content: flex-end; height: 25px; align-items: center; padding-right: 1px; }
        .main { display: flex; flex: 1; min-height: 0; }
        .left { display: flex; flex: none; width: 52px; gap: 5px; }
        .lower { margin-top: 254px; }
        .second { margin-top: 41px; }
        .apart { margin-top: 7px; }
        .work { display: flex; flex: 1; flex-direction: column; min-width: 0; margin-top: 2px; }
        .sheet { flex: 1; border-top: 2px solid #6e6e74; border-left: 2px solid #6e6e74; background: #fff; }
        .bottom { display: flex; height: 13px; }
        .dirs {
          flex: none;
          box-sizing: border-box;
          width: 162px;
          border-top: 1px solid #999;
          border-left: 2px solid #6e6e74;
          background: #f0f0f0;
          overflow: hidden;
          --tool-w: 20px;
          --tool-h: 18px;
          --icon: 12px;
        }
        .side { display: flex; flex: none; flex-direction: column; width: 17px; margin-top: 4px; background: #f0f0f0; --tool-w: 17px; --tool-h: 19px; --icon: 13px; }
        .side cad-tools { padding-bottom: 16px; }
        .tabs { flex: none; width: 23px; padding-top: 4px; background: #fbfbfb; }
        .tabs button {
          display: block;
          box-sizing: border-box;
          width: 20px;
          height: 57px;
          margin: 0 0 13px 3px;
          padding: 5px 0;
          border: 1px solid #999;
          border-right: 0;
          border-radius: 4px 0 0 4px;
          background: #fafafa;
          color: #555;
          font: 12px/16px Roboto, sans-serif;
          text-align: left;
          writing-mode: vertical-rl;
        }
        .tabs button + button { height: 75px; }
        .right { display: flex; flex: none; width: 106px; }
        .right cad-palette { flex: none; width: 26px; }
        .right cad-palette:first-child { width: 27px; --tool-h: 22px; }
      </style>

      <div class="title">
        <cad-icon name="logo"></cad-icon>
        <span>DesignCAD 3D MAX 2021 64-bit - [Namenlos-1 : Hauptansicht]</span>
        <cad-tools class="dock" icons="dock"></cad-tools>
        <cad-tools class="win" icons="min max close"></cad-tools>
      </div>

      <div class="menu">
        <cad-toolbar><cad-menu></cad-menu></cad-toolbar>
        <cad-tools class="win" icons="smin srest sclose"></cad-tools>
      </div>

      <div class="bar">
        <cad-toolbar>
          <cad-tools icons="new open save | print plot preview pdoc | cut copy paste | undo redo | origin render wire hidden shaded | *d2 d3 | parallel dashes axes probe node group ungroup *props info | whatsthis"></cad-tools>
        </cad-toolbar>
        <cad-toolbar>
          <cad-combo style="width:230px"></cad-combo>
          <cad-tools icons="| aplus a | *f dash"></cad-tools>
          <cad-combo style="width:230px"></cad-combo>
          <cad-tools icons="| hand s | layerset"></cad-tools>
        </cad-toolbar>
        <cad-toolbar>
          <cad-combo style="width:230px"></cad-combo>
          <cad-tools icons="| layers | hand aplus *pages | bulb lock"></cad-tools>
        </cad-toolbar>
        <cad-toolbar>
          <span class="label breite">Doppellinie (Breite):</span>
          <cad-combo style="width:200px;--inset:120px" value="de Öffnung"></cad-combo>
          <cad-tools icons="cross2 aplus a handblue"></cad-tools>
          <span class="element">Elementart:</span>
          <cad-combo style="width:79px" label="Elementart" value="Doppellinie"></cad-combo>
        </cad-toolbar>
        <cad-toolbar style="margin-left:20px">
          <cad-combo style="width:91px" value="Default"></cad-combo>
          <cad-tools icons="| textdoc scales a hand"></cad-tools>
        </cad-toolbar>
      </div>

      <div class="bar2">
        <cad-toolbar>
          <cad-combo style="width:92px" disabled label="Ansicht" value="Vorderansicht"></cad-combo>
          <cad-tools icons="|"></cad-tools>
          <cad-field label="X" value="-0.00"></cad-field>
          <cad-tools icons="| caml camr"></cad-tools>
          <cad-field label="Y" value="0.00"></cad-field>
          <cad-tools icons="| camu camd"></cad-tools>
          <cad-field label="Z" value="0.00"></cad-field>
          <cad-tools icons="| camcw camccw |"></cad-tools>
          <cad-field style="width:91px" label="Abstand" value="1000.00"></cad-field>
          <cad-tools icons="| movedown moveup camline camorigin camhot"></cad-tools>
        </cad-toolbar>
      </div>

      <div class="main">
        <div class="left">
          <div>
            <cad-palette><cad-tools vertical icons="zdoc zprev zout zin znext zwin"></cad-tools></cad-palette>
            <cad-palette><cad-tools vertical icons="query lamp plus delete stretch dup textbox infobox measure trim pagebox"></cad-tools></cad-palette>
            <cad-palette class="lower"><cad-tools vertical icons="*off cursors wand *tri g l i i2 m m2 mid center cg tangent quad"></cad-tools></cad-palette>
          </div>
          <div class="second">
            <cad-palette><cad-tools vertical icons="select~ move~ polyline~ cube~ arc~ circle~ plane~ array^ dim~ text point^ polygons^ hatch~ dashline black"></cad-tools></cad-palette>
            <cad-palette><cad-tools vertical icons="cube polyline zline qline perp qperp qcircle arrow leader hatchb"></cad-tools></cad-palette>
            <cad-palette><cad-tools vertical icons="corner span point dcross hash caliper fillet chamfer trim curve"></cad-tools></cad-palette>
            <cad-palette class="apart"><cad-tools vertical icons="hatch hatchc hatchb"></cad-tools></cad-palette>
            <cad-palette><cad-tools vertical icons="panel frame"></cad-tools></cad-palette>
          </div>
        </div>

        <div class="work">
          <div class="sheet"></div>
          <div class="bottom">
            <div class="dirs"><cad-tools icons="r0 r1 r2 r3 r4 r5 r6 r7"></cad-tools></div>
            <cad-scroll style="--before:952;--size:1042;--after:952"></cad-scroll>
          </div>
        </div>

        <div class="side">
          <cad-scroll vertical style="--before:351;--size:386;--after:352"></cad-scroll>
          <cad-tools vertical icons="vfit vgrid vpan zdoc vwin vin vout vprev vnext"></cad-tools>
        </div>

        <div class="tabs"><button type="button">Themes</button><button type="button">Strukturinfo</button></div>

        <div class="right">
          <cad-palette>
            <cad-swatches></cad-swatches>
            <cad-tools vertical icons="| a | handbox | palette | colset"></cad-tools>
          </cad-palette>
          <cad-palette><cad-tools vertical icons="front back"></cad-tools></cad-palette>
          <cad-palette><cad-tools vertical icons="globes docs rotate percent scale polygons rays"></cad-tools></cad-palette>
          <cad-palette><cad-tools vertical icons="abs xy dx da"></cad-tools></cad-palette>
        </div>
      </div>

      <cad-float style="left:2321px;top:131px"></cad-float>
      <cad-float style="left:2458px;top:159px"></cad-float>
      <cad-float style="left:2505px;top:154px"></cad-float>
      <cad-ribbon></cad-ribbon>
    `;
  }
}

customElements.define("cad-icon", CadIcon);
customElements.define("cad-tools", CadTools);
customElements.define("cad-toolbar", CadToolbar);
customElements.define("cad-palette", CadPalette);
customElements.define("cad-combo", CadCombo);
customElements.define("cad-field", CadField);
customElements.define("cad-menu", CadMenu);
customElements.define("cad-float", CadFloat);
customElements.define("ribbon-item", RibbonItem);
customElements.define("cad-ribbon", CadRibbon);
customElements.define("cad-swatches", CadSwatches);
customElements.define("cad-scroll", CadScroll);
customElements.define("cad-app", CadApp);
</script>
</body>
</html>
